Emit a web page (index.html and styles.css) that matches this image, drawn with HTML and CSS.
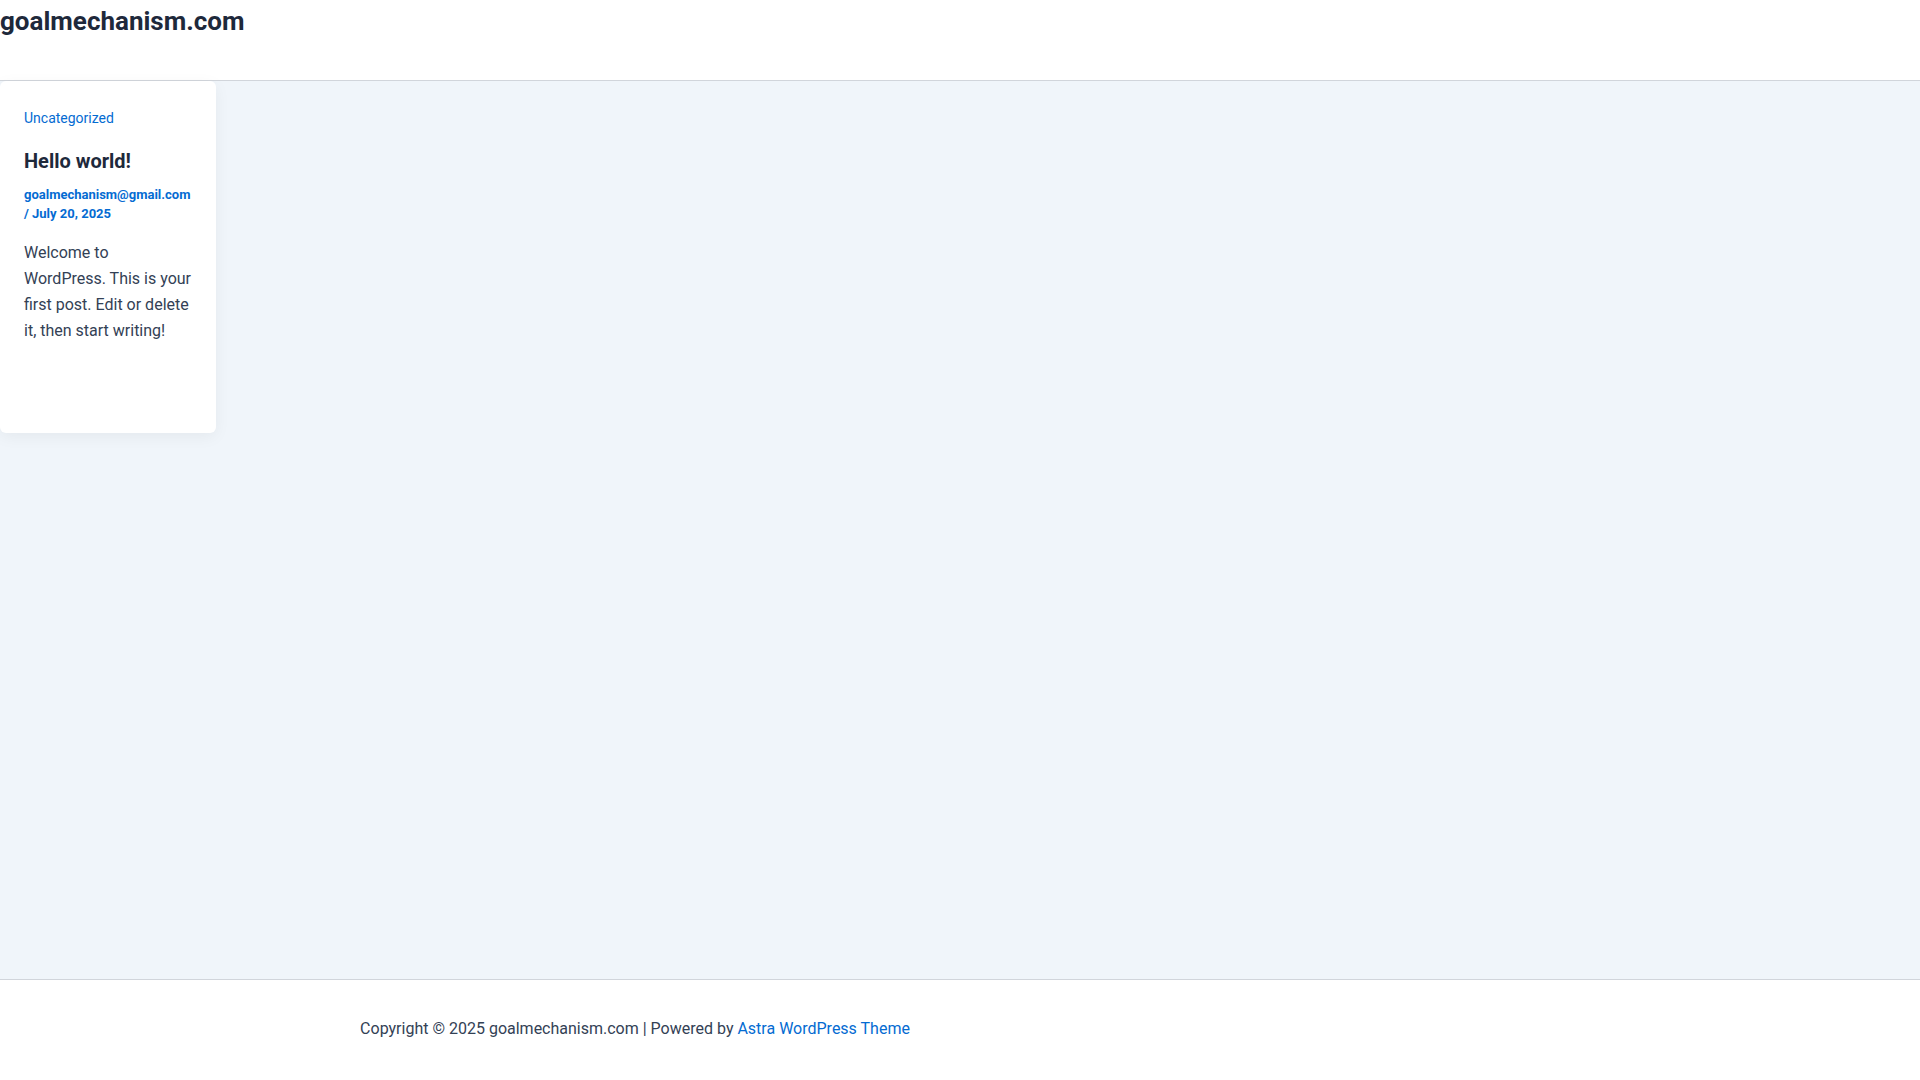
FILE: index.html
```html
<!DOCTYPE html>
<html lang="en">
<head>
<meta charset="utf-8">
<title>goalmechanism.com</title>
<link rel="stylesheet" href="styles.css">
</head>
<body>
<div class="page">
  <header class="site-header">
    <a class="site-title" href="#">goalmechanism.com</a>
  </header>
  <main class="site-main">
    <article class="post-card">
      <a class="cat" href="#">Uncategorized</a>
      <h2 class="post-title">Hello world!</h2>
      <div class="meta"><a href="#">goalmechanism@gmail.com</a> / <a href="#">July 20, 2025</a></div>
      <p class="excerpt">Welcome to WordPress. This is your first post. Edit or delete it, then start writing!</p>
    </article>
  </main>
  <footer class="site-footer">
    <div class="footer-col">Copyright © 2025 goalmechanism.com | Powered by <a href="#">Astra WordPress Theme</a></div>
    <div class="footer-col"></div>
  </footer>
</div>
</body>
</html>
```
FILE: styles.css
```css
* { box-sizing: border-box; }
html, body { margin: 0; padding: 0; }
body {
  font-family: Roboto, "Liberation Sans", sans-serif;
  color: #334155;
  background: #ffffff;
  font-size: 16px;
}
a { text-decoration: none; color: #046bd2; }
.page {
  display: flex;
  flex-direction: column;
  min-height: 1080px;
}
.site-header {
  height: 81px;
  border-bottom: 1px solid #d1d5db;
  background: #fff;
}
.site-title {
  display: block;
  font-size: 26px;
  font-weight: 700;
  color: #1e293b;
  line-height: 1;
  padding-top: 8px;
}
.site-main {
  flex: 1;
  background: #f0f5fa;
  display: flex;
  align-items: flex-start;
}
.post-card {
  width: 216px;
  background: #fff;
  border-radius: 6px;
  padding: 27px 24px 89px;
  box-shadow: 0 4px 16px rgba(0, 0, 0, 0.05);
}
.cat {
  display: block;
  font-size: 14px;
  line-height: 20px;
}
.post-title {
  margin: 18px 0 0;
  font-size: 20px;
  line-height: 30px;
  font-weight: 700;
  color: #1e293b;
}
.meta {
  margin-top: 9px;
  font-size: 13px;
  font-weight: 700;
  line-height: 19px;
  color: #046bd2;
}
.excerpt {
  margin: 17px 0 0;
  font-size: 16px;
  line-height: 26px;
}
.site-footer {
  height: 101px;
  border-top: 1px solid #d1d5db;
  background: #fff;
  display: grid;
  grid-template-columns: 1270px 1fr;
  align-items: center;
}
.footer-col {
  text-align: center;
  font-size: 16px;
  line-height: 24px;
  padding-bottom: 2px;
}
```
